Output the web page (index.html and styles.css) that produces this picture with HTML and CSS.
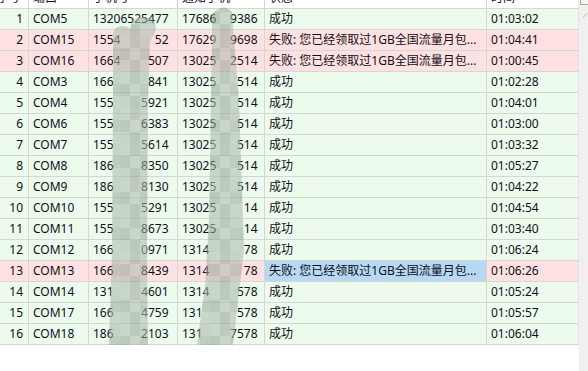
FILE: index.html
```html
<!DOCTYPE html>
<html lang="zh">
<head>
<meta charset="utf-8">
<link rel="stylesheet" href="styles.css">
</head>
<body>
<div class="view">
  <div class="table">
    <div class="row head">
      <div class="c c1 hl">序号</div><div class="c c2">端口</div><div class="c c3">手机号</div><div class="c c4">通知手机</div><div class="c c5">状态</div><div class="c c6">时间</div>
    </div>
    <div class="row ok"><div class="c c1">1</div><div class="c c2">COM5</div><div class="c c3">13206525477</div><div class="c c4">17686<i>00</i>9386</div><div class="c c5">成功</div><div class="c c6">01:03:02</div></div>
    <div class="row bad"><div class="c c1">2</div><div class="c c2">COM15</div><div class="c c3">1554<i>00000</i>52</div><div class="c c4">17629<i>00</i>9698</div><div class="c c5">失败: 您已经领取过1GB全国流量月包...</div><div class="c c6">01:04:41</div></div>
    <div class="row bad"><div class="c c1">3</div><div class="c c2">COM16</div><div class="c c3">1664<i>0000</i>507</div><div class="c c4">13025<i>00</i>2514</div><div class="c c5">失败: 您已经领取过1GB全国流量月包...</div><div class="c c6">01:00:45</div></div>
    <div class="row ok"><div class="c c1">4</div><div class="c c2">COM3</div><div class="c c3">166<i>00000</i>841</div><div class="c c4">13025<i>000</i>514</div><div class="c c5">成功</div><div class="c c6">01:02:28</div></div>
    <div class="row ok"><div class="c c1">5</div><div class="c c2">COM4</div><div class="c c3">155<i>0000</i>5921</div><div class="c c4">13025<i>000</i>514</div><div class="c c5">成功</div><div class="c c6">01:04:01</div></div>
    <div class="row ok"><div class="c c1">6</div><div class="c c2">COM6</div><div class="c c3">155<i>0000</i>6383</div><div class="c c4">13025<i>000</i>514</div><div class="c c5">成功</div><div class="c c6">01:03:00</div></div>
    <div class="row ok"><div class="c c1">7</div><div class="c c2">COM7</div><div class="c c3">155<i>0000</i>5614</div><div class="c c4">13025<i>000</i>514</div><div class="c c5">成功</div><div class="c c6">01:03:32</div></div>
    <div class="row ok"><div class="c c1">8</div><div class="c c2">COM8</div><div class="c c3">186<i>0000</i>8350</div><div class="c c4">13025<i>000</i>514</div><div class="c c5">成功</div><div class="c c6">01:05:27</div></div>
    <div class="row ok"><div class="c c1">9</div><div class="c c2">COM9</div><div class="c c3">186<i>0000</i>8130</div><div class="c c4">13025<i>000</i>514</div><div class="c c5">成功</div><div class="c c6">01:04:22</div></div>
    <div class="row ok"><div class="c c1">10</div><div class="c c2">COM10</div><div class="c c3">155<i>0000</i>5291</div><div class="c c4">13025<i>0000</i>14</div><div class="c c5">成功</div><div class="c c6">01:04:54</div></div>
    <div class="row ok"><div class="c c1">11</div><div class="c c2">COM11</div><div class="c c3">155<i>0000</i>8673</div><div class="c c4">13025<i>0000</i>14</div><div class="c c5">成功</div><div class="c c6">01:03:40</div></div>
    <div class="row ok"><div class="c c1">12</div><div class="c c2">COM12</div><div class="c c3">166<i>0000</i>0971</div><div class="c c4">1314<i>00000</i>78</div><div class="c c5">成功</div><div class="c c6">01:06:24</div></div>
    <div class="row bad"><div class="c c1">13</div><div class="c c2">COM13</div><div class="c c3">166<i>0000</i>8439</div><div class="c c4">1314<i>00000</i>78</div><div class="c c5 sel">失败: 您已经领取过1GB全国流量月包...</div><div class="c c6">01:06:26</div></div>
    <div class="row ok"><div class="c c1">14</div><div class="c c2">COM14</div><div class="c c3">131<i>0000</i>4601</div><div class="c c4">1314<i>0000</i>578</div><div class="c c5">成功</div><div class="c c6">01:05:24</div></div>
    <div class="row ok"><div class="c c1">15</div><div class="c c2">COM17</div><div class="c c3">166<i>0000</i>4759</div><div class="c c4">131<i>00000</i>578</div><div class="c c5">成功</div><div class="c c6">01:05:57</div></div>
    <div class="row ok"><div class="c c1">16</div><div class="c c2">COM18</div><div class="c c3">186<i>0000</i>2103</div><div class="c c4">131<i>0000</i>7578</div><div class="c c5">成功</div><div class="c c6">01:06:04</div></div>
  </div>
  <div class="scroll">
    <div class="corner"></div>
    <div class="thumbmark"></div>
  </div>
  <svg class="mask" width="588" height="371" viewBox="0 0 588 371">
    <defs>
      <pattern id="mosaic" width="30" height="36" patternUnits="userSpaceOnUse">
        <rect x="0" y="0" width="10" height="12" fill="rgba(255,255,255,0.12)"/>
        <rect x="10" y="0" width="10" height="12" fill="rgba(0,0,0,0.03)"/>
        <rect x="20" y="0" width="10" height="12" fill="rgba(255,255,255,0.05)"/>
        <rect x="0" y="12" width="10" height="12" fill="rgba(0,0,0,0.04)"/>
        <rect x="10" y="12" width="10" height="12" fill="rgba(255,255,255,0.1)"/>
        <rect x="20" y="12" width="10" height="12" fill="rgba(0,0,0,0.02)"/>
        <rect x="0" y="24" width="10" height="12" fill="rgba(255,255,255,0.07)"/>
        <rect x="10" y="24" width="10" height="12" fill="rgba(0,0,0,0.04)"/>
        <rect x="20" y="24" width="10" height="12" fill="rgba(255,255,255,0.12)"/>
      </pattern>
    </defs>
    <path class="blob" d="M109,345 L112,250 L113,100 L113,36 Q113,26 122,26 Q128,26 130,29 Q132,17 143,17 Q156,17 156,30 L150,42 L148,100 L147,250 L148,345 Z"/>
    <path class="blob-mo" d="M109,345 L112,250 L113,100 L113,36 Q113,26 122,26 Q128,26 130,29 Q132,17 143,17 Q156,17 156,30 L150,42 L148,100 L147,250 L148,345 Z"/>
    <path class="blob" d="M212,14 Q222,2 232,12 L234,40 L239,100 L244,250 L233,345 L197,345 L205,285 L209,220 L211,100 L212,40 Z"/>
    <path class="blob-mo" d="M212,14 Q222,2 232,12 L234,40 L239,100 L244,250 L233,345 L197,345 L205,285 L209,220 L211,100 L212,40 Z"/>
  </svg>
</div>
</body>
</html>
```

FILE: styles.css
```css
html, body {
  margin: 0;
  padding: 0;
  background: #ffffff;
}

.view {
  position: relative;
  width: 588px;
  height: 371px;
  overflow: hidden;
  display: flex;
  align-items: flex-start;
  font-family: "Noto Sans", "Noto Sans CJK SC", sans-serif;
  font-size: 12px;
  color: #10101c;
}

.table {
  width: 579px;
  flex: 0 0 579px;
  margin-top: -12px;
}

.row {
  display: grid;
  grid-template-columns: 29px 60px 89px 87px 222px 92px;
  height: 21px;
}

.row.ok { background: #ecfbec; }
.row.bad { background: #ffe1e1; }
.row.head { background: #ffffff; }

.c {
  box-sizing: border-box;
  height: 21px;
  line-height: 20px;
  padding-left: 4px;
  border-right: 1px solid #d6d6d6;
  border-bottom: 1px solid #d6d6d6;
  white-space: nowrap;
  overflow: hidden;
}

.c1 {
  text-align: right;
  padding-left: 0;
  padding-right: 5px;
}

.head .hl {
  text-align: left;
  padding-left: 0;
  text-indent: -4px;
}

.c6 {
  border-right-color: #e4e4e4;
}

.sel {
  background: #b6d8f2;
}

.c i {
  font-style: normal;
  color: transparent;
}

.scroll {
  flex: 0 0 9px;
  align-self: stretch;
  background: #f0f0f0;
  position: relative;
}

.corner {
  position: absolute;
  left: 1px;
  top: -3px;
  width: 7px;
  height: 6px;
  border: 1px solid #b4a48a;
  background: #f6f6f6;
}

.thumbmark {
  position: absolute;
  left: 3px;
  top: 15px;
  width: 6px;
  height: 1px;
  background: #c8c8c8;
  transform: rotate(-45deg);
}

.mask {
  position: absolute;
  left: 0;
  top: 0;
  pointer-events: none;
}

.blob {
  fill: rgba(160, 176, 160, 0.55);
}

.blob-mo {
  fill: url(#mosaic);
}
```
